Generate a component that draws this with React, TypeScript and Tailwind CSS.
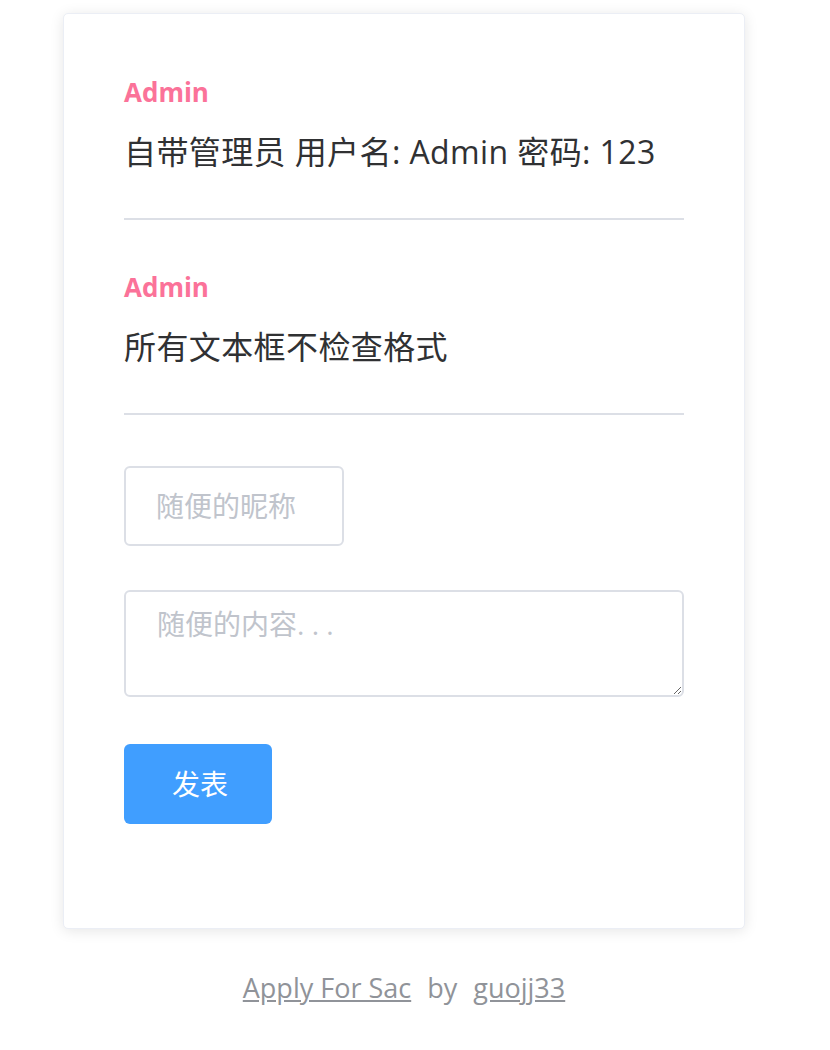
const font = "font-['Segoe_UI','Open_Sans','Noto_Sans_CJK_SC',sans-serif]";

const notes = [
  { author: 'Admin', text: '自带管理员 用户名: Admin 密码: 123' },
  { author: 'Admin', text: '所有文本框不检查格式' },
];

export default function App() {
  return (
    <div className={`min-h-[1050px] bg-white ${font}`}>
      <div className="ml-[63px] w-[682px] pt-[13px]">
        {/* card */}
        <div className="rounded-[5px] border border-[#ebeef5] bg-white px-[60px] pt-[60px] pb-[104px] shadow-[0_2px_14px_0_rgba(0,0,0,0.1)]">
          {notes.map((n, i) => (
            <div key={i} className={i > 0 ? 'pt-[49px]' : ''}>
              <div className="text-[26px] leading-[36px] font-bold text-[#fb7299]">{n.author}</div>
              <div className="mt-[22px] text-[32px] leading-[40px] tracking-[0.4px] text-[#303133]">{n.text}</div>
              <div className="mt-[46px] h-[2px] bg-[#dcdfe6]" />
            </div>
          ))}

          <input
            className="mt-[51px] block h-[80px] w-[220px] rounded-[6px] border-2 border-[#dcdfe6] px-[30px] text-[28px] text-[#606266] outline-none placeholder:text-[#c0c4cc]"
            placeholder="随便的昵称"
          />
          <textarea
            className="mt-[44px] block h-[107px] w-full rounded-[6px] border-2 border-[#dcdfe6] px-[31px] pt-[14px] text-[28px] leading-[36px] text-[#606266] outline-none placeholder:text-[#c0c4cc]"
            placeholder="随便的内容. . ."
          />
          <button className="mt-[47px] block h-[80px] w-[148px] rounded-[6px] bg-[#409eff] pl-[4px] text-[28px] text-white">
            发表
          </button>
        </div>

        {/* footer */}
        <div className="mt-[41px] text-center text-[27px] leading-[36px] text-[#909399]">
          <a className="underline" href="#">Apply For Sac</a>
          <span className="mx-[16px]">by</span>
          <a className="underline" href="#">guojj33</a>
        </div>
      </div>
    </div>
  );
}
